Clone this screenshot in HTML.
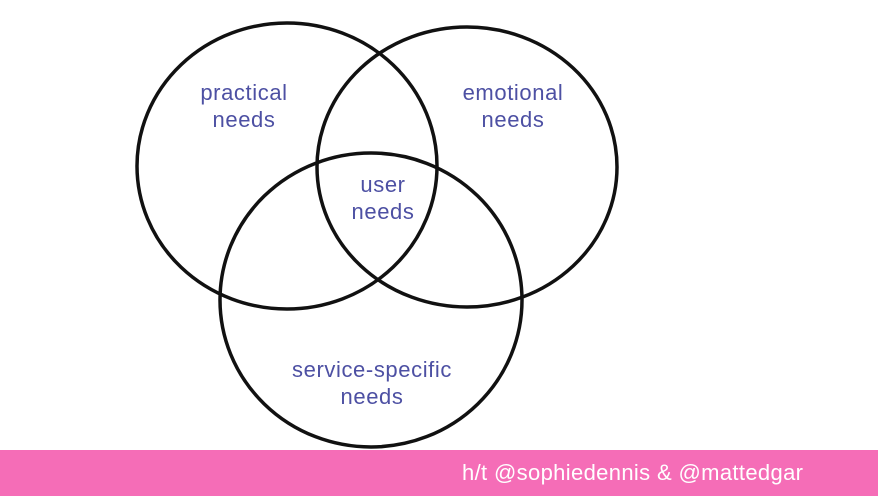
<!DOCTYPE html>
<html><head><style>
body{margin:0;width:878px;height:496px;background:#fff;overflow:hidden;position:relative;font-family:"Liberation Sans",sans-serif}
.t{position:absolute;color:#4d50a3;font-size:22px;letter-spacing:0.6px;line-height:27px;text-align:center;transform:translateX(-50%);white-space:nowrap}
.bar{position:absolute;left:0;top:450px;width:878px;height:46px;background:#f56db7}
.bar span{position:absolute;left:462px;top:10px;color:#fff;font-size:22px;letter-spacing:0.35px}
</style></head><body>
<svg width="878" height="496" style="position:absolute;left:0;top:0">
<g fill="none" stroke="#111" stroke-width="3.5">
<ellipse cx="287" cy="166" rx="150" ry="143"/>
<ellipse cx="467" cy="167" rx="150" ry="140"/>
<ellipse cx="371" cy="300" rx="151" ry="147"/>
</g></svg>
<div class="t" style="left:244px;top:79px">practical<br>needs</div>
<div class="t" style="left:513px;top:79px">emotional<br>needs</div>
<div class="t" style="left:383px;top:171px">user<br>needs</div>
<div class="t" style="left:372px;top:356px">service-specific<br>needs</div>
<div class="bar"><span>h/t @sophiedennis &amp; @mattedgar</span></div>
</body></html>
